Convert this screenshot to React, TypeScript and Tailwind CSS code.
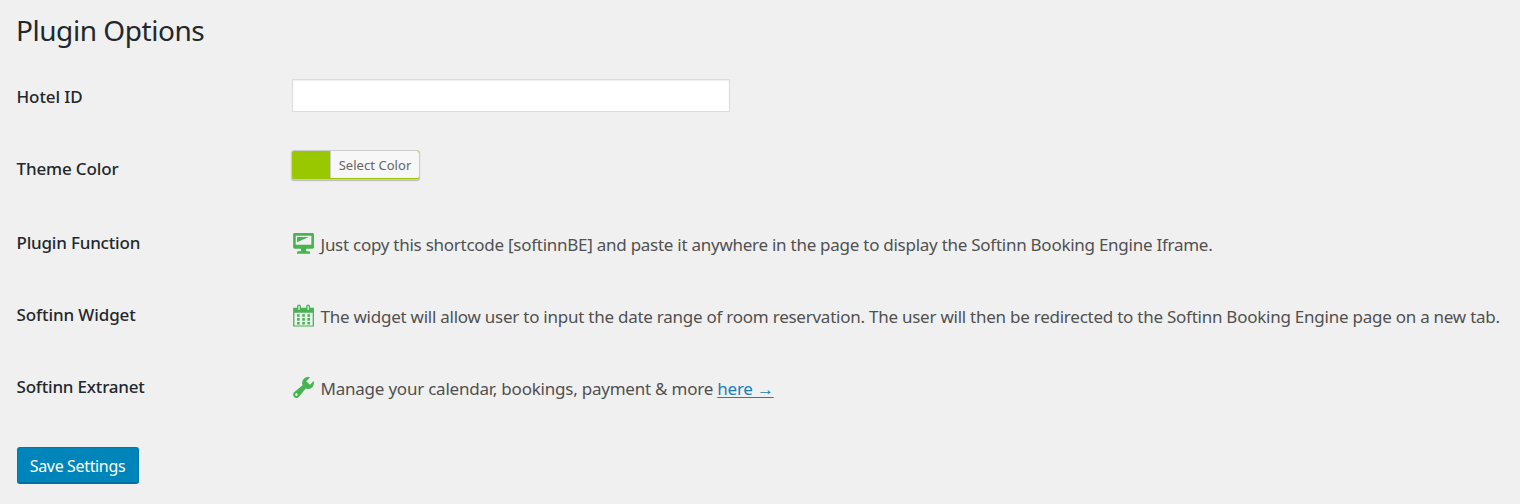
import type { ReactNode } from "react";

function Icon({ d }: { d: string }) {
  return (
    <svg className="h-[22px] w-[22px] shrink-0 overflow-visible" viewBox="1.9 1.2 16.9 16.9" fill="#46b450">
      <path d={d} />
    </svg>
  );
}

const desktopPath =
  "M3 2h14c.55 0 1 .45 1 1v10c0 .55-.45 1-1 1h-5v2h2c.55 0 1 .45 1 1v1H5v-1c0-.55.45-1 1-1h2v-2H3c-.55 0-1-.45-1-1V3c0-.55.45-1 1-1zm13 9V4H4v7h12zM5 5h9L5 9V5z";

const calendarPath =
  "M15 4h3v14.500H2V4h3V3c0-.83.67-1.500 1.500-1.500S8 2.170 8 3v1h4V3c0-.83.67-1.500 1.500-1.500S15 2.170 15 3v1zM6 3v2.500c0 .28.22.5.5.5s.5-.22.5-.5V3c0-.28-.22-.5-.5-.5S6 2.720 6 3zm7 0v2.500c0 .28.22.5.5.5s.5-.22.5-.5V3c0-.28-.22-.5-.5-.5s-.5.22-.5.5zm4 14.700V8H3v9.700h14zM7 9v2H5V9h2zm2 0h2v2H9V9zm4 2V9h2v2h-2zm-6 1v2H5v-2h2zm2 0h2v2H9v-2zm4 2v-2h2v2h-2zm-6 1v2H5v-2h2zm4 2H9v-2h2v2zm4 0h-2v-2h2v2z";

const wrenchPath =
  "M16.680 9.770c-1.340 1.340-3.300 1.670-4.950.99l-5.410 6.520c-.99.99-2.590.99-3.580 0s-.99-2.590 0-3.570l6.520-5.420c-.68-1.650-.35-3.610.99-4.950 1.280-1.280 3.120-1.620 4.720-1.060l-2.890 2.890 2.820 2.820 2.860-2.870c.53 1.580.18 3.390-1.080 4.650zM3.810 16.210c.4.39 1.040.39 1.430 0 .4-.4.4-1.040 0-1.430-.39-.4-1.030-.4-1.430 0-.39.39-.39 1.030 0 1.430z";

function Row({ label, labelClass, children }: { label: string; labelClass: string; children: ReactNode }) {
  return (
    <div className="flex h-[72px] items-center">
      <div className={`w-[275px] shrink-0 pt-[2px] pl-[0.5px] text-[17px] leading-6 font-medium whitespace-nowrap text-[#23282d] ${labelClass}`}>{label}</div>
      {children}
    </div>
  );
}

function Note({ icon, children, className }: { icon: string; children: ReactNode; className: string }) {
  return (
    <div className="flex items-center gap-[6px] pt-[2px] pl-[1.5px]">
      <Icon d={icon} />
      <p className={`pt-[3px] text-[17px] leading-6 whitespace-nowrap text-[#505050] ${className}`}>{children}</p>
    </div>
  );
}

export default function App() {
  return (
    <main className="h-[504px] w-[1520px] overflow-hidden bg-[#f0f0f0] pl-4 font-['Noto_Sans',sans-serif]">
      <h1 className="h-[60px] pt-[11px] text-[28px] leading-[38px] font-normal tracking-[-0.45px] whitespace-nowrap text-[#23282d]">
        Plugin Options
      </h1>
      <Row label="Hotel ID" labelClass="tracking-[-0.1px]">
        <input aria-label="Hotel ID" className="mb-[2px] ml-px h-[33px] w-[438px] border border-[#ddd] bg-white px-2 shadow-[inset_0_1px_2px_rgba(0,0,0,0.07)] outline-none" />
      </Row>
      <Row label="Theme Color" labelClass="tracking-[-0.15px]">
        <button className="mb-[6px] flex h-[30px] w-[129px] overflow-hidden rounded-[3px] border border-[#ccc] bg-[#99c700] shadow-[0_1px_1px_#bbb]">
          <span className="w-[38px]" />
          <span className="h-[27px] flex-1 rounded-r-[2px] border-l border-[#ccc] bg-[#f7f7f7] text-[13px] leading-[28px] tracking-[0.05px] whitespace-nowrap text-[#666]">Select Color</span>
        </button>
      </Row>
      <div className="h-[2px]" />
      <Row label="Plugin Function" labelClass="tracking-[-0.2px]">
        <Note icon={desktopPath} className="tracking-[-0.263px]">
          Just copy this shortcode [softinnBE] and paste it anywhere in the page to display the Softinn Booking Engine Iframe.
        </Note>
      </Row>
      <Row label="Softinn Widget" labelClass="tracking-[-0.1px]">
        <Note icon={calendarPath} className="tracking-[-0.247px]">
          The widget will allow user to input the date range of room reservation. The user will then be redirected to the Softinn Booking Engine page on a new tab.
        </Note>
      </Row>
      <Row label="Softinn Extranet" labelClass="tracking-[-0.2px]">
        <Note icon={wrenchPath} className="tracking-[-0.225px]">
          Manage your calendar, bookings, payment &amp; more{" "}
          <a href="#" className="text-[#1a7fb4] underline decoration-1 underline-offset-2">here →</a>
        </Note>
      </Row>
      <button className="mt-[25px] ml-[0.5px] flex h-[36px] w-[122px] items-center justify-center rounded-[3px] border border-[#0079b0] border-b-[#006fa3] bg-[#0085ba] pt-px text-[16px] tracking-[-0.35px] whitespace-nowrap text-white shadow-[0_1px_0_#006fa3]">
        Save Settings
      </button>
    </main>
  );
}
